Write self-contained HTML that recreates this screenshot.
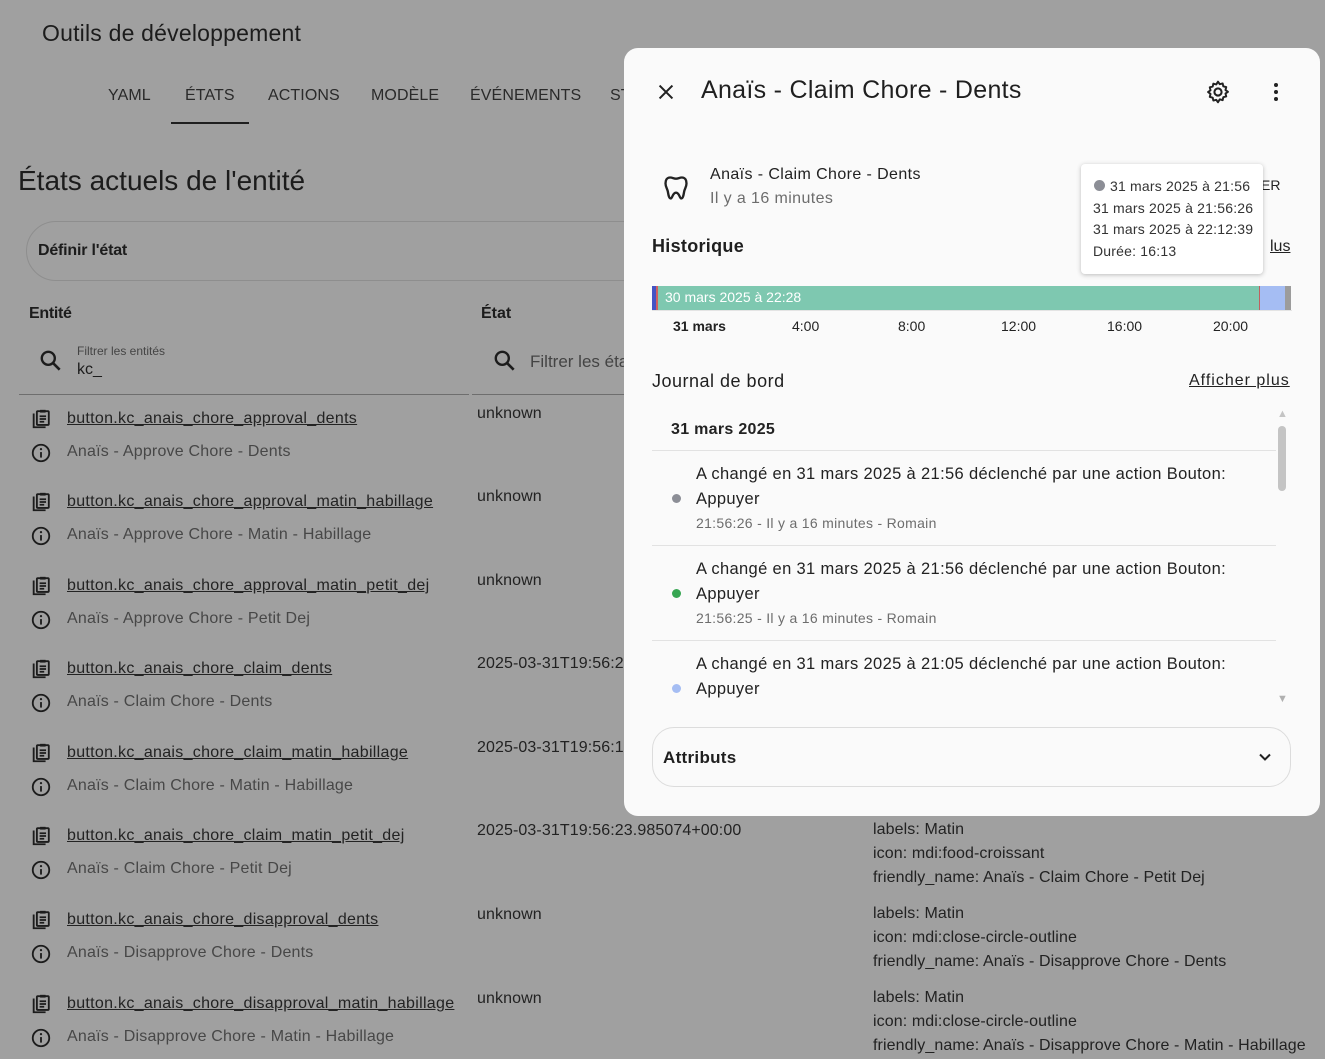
<!DOCTYPE html>
<html><head><meta charset="utf-8"><style>
*{margin:0;padding:0;box-sizing:border-box}
body{width:1325px;height:1059px;overflow:hidden;background:#a0a0a0;font-family:"Liberation Sans",sans-serif;color:#1c1c1c;position:relative}
.a{position:absolute;white-space:nowrap}
.tab{position:absolute;top:87px;font-size:16px;color:#2a2a2a;letter-spacing:0.1px}
.lnk{font-size:16px;text-decoration:underline;color:#232323;letter-spacing:0.3px}
.sub{font-size:16px;color:#474747;letter-spacing:0.2px}
.st{font-size:16px;color:#222;letter-spacing:0.1px}
.attr{font-size:16px;color:#222;line-height:24px;letter-spacing:0.1px}
.dlg{position:absolute;left:624px;top:48px;width:696px;height:768px;background:#fafafa;border-radius:14px;overflow:hidden}
.tk{position:absolute;top:0;font-size:14px;color:#222}
.msg{position:absolute;left:72px;font-size:16.5px;color:#222;line-height:25px;letter-spacing:0.35px}
.dot{position:absolute;left:48px;width:9px;height:9px;border-radius:50%}
.meta{position:absolute;left:72px;font-size:14px;color:#6d6d6d;letter-spacing:0.3px}
</style></head><body>
<div class="a" style="left:42px;top:20px;font-size:23px;color:#1c1c1c;letter-spacing:0.2px">Outils de développement</div>
<div class="tab" style="left:108px">YAML</div>
<div class="tab" style="left:185px">ÉTATS</div>
<div style="position:absolute;left:171px;top:122px;width:78px;height:2px;background:#1f1f1f"></div>
<div class="tab" style="left:268px">ACTIONS</div>
<div class="tab" style="left:371px">MODÈLE</div>
<div class="tab" style="left:470px">ÉVÉNEMENTS</div>
<div class="tab" style="left:610px">ST</div>
<div class="a" style="left:18px;top:165px;font-size:28px;color:#1c1c1c;letter-spacing:0px">États actuels de l'entité</div>
<div style="position:absolute;left:26px;top:221px;width:640px;height:60px;border:1px solid #8e8e8e;border-radius:30px"></div>
<div class="a" style="left:38px;top:242px;font-size:16px;font-weight:bold;letter-spacing:-0.2px">Définir l'état</div>
<div class="a" style="left:29px;top:305px;font-size:16px;font-weight:bold;letter-spacing:-0.3px">Entité</div>
<div class="a" style="left:481px;top:305px;font-size:16px;font-weight:bold">État</div>
<svg class="a" style="left:38px;top:348px" width="26" height="26" viewBox="0 0 24 24"><circle cx="9.5" cy="9.5" r="6" fill="none" stroke="#1c1c1c" stroke-width="2.2"/><path d="M14 14l6 6" stroke="#1c1c1c" stroke-width="2.4"/></svg>
<div class="a" style="left:77px;top:344px;font-size:12px;color:#444">Filtrer les entités</div>
<div class="a" style="left:77px;top:361px;font-size:16px">kc_</div>
<svg class="a" style="left:492px;top:348px" width="26" height="26" viewBox="0 0 24 24"><circle cx="9.5" cy="9.5" r="6" fill="none" stroke="#1c1c1c" stroke-width="2.2"/><path d="M14 14l6 6" stroke="#1c1c1c" stroke-width="2.4"/></svg>
<div class="a" style="left:530px;top:352px;font-size:17px;color:#444">Filtrer les éta</div>
<div style="position:absolute;left:19px;top:394px;width:450px;height:1px;background:#6e6e6e"></div>
<div style="position:absolute;left:472px;top:394px;width:160px;height:1px;background:#6e6e6e"></div>

<div id="rows"></div>
<script>
var rows=[
["button.kc_anais_chore_approval_dents","Anaïs - Approve Chore - Dents","unknown"],
["button.kc_anais_chore_approval_matin_habillage","Anaïs - Approve Chore - Matin - Habillage","unknown"],
["button.kc_anais_chore_approval_matin_petit_dej","Anaïs - Approve Chore - Petit Dej","unknown"],
["button.kc_anais_chore_claim_dents","Anaïs - Claim Chore - Dents","2025-03-31T19:56:2"],
["button.kc_anais_chore_claim_matin_habillage","Anaïs - Claim Chore - Matin - Habillage","2025-03-31T19:56:1"],
["button.kc_anais_chore_claim_matin_petit_dej","Anaïs - Claim Chore - Petit Dej","2025-03-31T19:56:23.985074+00:00"],
["button.kc_anais_chore_disapproval_dents","Anaïs - Disapprove Chore - Dents","unknown"],
["button.kc_anais_chore_disapproval_matin_habillage","Anaïs - Disapprove Chore - Matin - Habillage","unknown"]];
var tops=[410,493,577,660,744,827,911,995];
var attrs={5:["labels: Matin","icon: mdi:food-croissant","friendly_name: Anaïs - Claim Chore - Petit Dej"],6:["labels: Matin","icon: mdi:close-circle-outline","friendly_name: Anaïs - Disapprove Chore - Dents"],7:["labels: Matin","icon: mdi:close-circle-outline","friendly_name: Anaïs - Disapprove Chore - Matin - Habillage"]};
var h="";
rows.forEach(function(r,i){var t=tops[i];
h+='<svg class="a" style="left:30px;top:'+(t-2)+'px" width="22" height="22" viewBox="0 0 24 24"><path d="M4 6v15h13" fill="none" stroke="#1c1c1c" stroke-width="2"/><rect x="7.5" y="3.5" width="13" height="15" rx="1" fill="none" stroke="#1c1c1c" stroke-width="2"/><rect x="11" y="2" width="6" height="3" fill="#1c1c1c"/><path d="M10.5 9h7M10.5 12h7M10.5 15h5" stroke="#1c1c1c" stroke-width="1.8"/></svg>';
h+='<div class="a lnk" style="left:67px;top:'+t+'px">'+r[0]+'</div>';
h+='<svg class="a" style="left:30px;top:'+(t+32)+'px" width="22" height="22" viewBox="0 0 24 24"><circle cx="12" cy="12" r="9" fill="none" stroke="#1c1c1c" stroke-width="2"/><path d="M12 11v6" stroke="#1c1c1c" stroke-width="2"/><circle cx="12" cy="7.8" r="1.2" fill="#1c1c1c"/></svg>';
h+='<div class="a sub" style="left:67px;top:'+(t+33)+'px">'+r[1]+'</div>';
h+='<div class="a st" style="left:477px;top:'+(t-5)+'px">'+r[2]+'</div>';
if(attrs[i]){h+='<div class="a attr" style="left:873px;top:'+(t-9)+'px">'+attrs[i].join('<br>')+'</div>';}
});
document.getElementById('rows').innerHTML=h;
</script>

<div class="dlg">
<svg class="a" style="left:31px;top:33px" width="22" height="22" viewBox="0 0 24 24"><path d="M5 5l14 14M19 5L5 19" stroke="#222" stroke-width="2.2"/></svg>
<div class="a" style="left:77px;top:28px;font-size:25px;color:#1f1f1f;letter-spacing:0.3px">Anaïs - Claim Chore - Dents</div>
<svg class="a" style="left:581px;top:31px" width="26" height="26" viewBox="0 0 24 24"><path d="M12 2.5l1.6 2.3 2.7-.7.6 2.7 2.7.7-.7 2.7 2.3 1.6-2.3 1.6.7 2.7-2.7.7-.6 2.7-2.7-.7L12 21.5l-1.6-2.3-2.7.7-.6-2.7-2.7-.7.7-2.7L2.8 12l2.3-1.6-.7-2.7 2.7-.7.6-2.7 2.7.7z" fill="none" stroke="#222" stroke-width="1.8" stroke-linejoin="round"/><circle cx="12" cy="12" r="3.3" fill="none" stroke="#222" stroke-width="1.9"/></svg>
<svg class="a" style="left:640px;top:32px" width="24" height="24" viewBox="0 0 24 24"><circle cx="12" cy="5" r="2" fill="#222"/><circle cx="12" cy="12" r="2" fill="#222"/><circle cx="12" cy="19" r="2" fill="#222"/></svg>
<svg class="a" style="left:38px;top:126px" width="28" height="28" viewBox="0 0 24 24"><path d="M7 3C4 3 3 5.5 3 8c0 3 1.5 4.5 2 7 .5 3 1 6 2.5 6s1.5-5 4.5-5 3 5 4.5 5 2-3 2.5-6c.5-2.5 2-4 2-7 0-2.5-1-5-4-5-2 0-3 1-5 1S9 3 7 3z" fill="none" stroke="#222" stroke-width="2" stroke-linejoin="round"/></svg>
<div class="a" style="left:86px;top:118px;font-size:16px;color:#222;letter-spacing:0.4px">Anaïs - Claim Chore - Dents</div>
<div class="a" style="left:86px;top:142px;font-size:16px;color:#6d6d6d;letter-spacing:0.4px">Il y a 16 minutes</div>
<div class="a" style="left:637px;top:129px;font-size:14px;color:#222">ER</div>
<div class="a" style="left:28px;top:188px;font-size:18px;color:#1f1f1f;font-weight:bold;letter-spacing:0.3px">Historique</div>
<div class="a" style="left:646px;top:190px;font-size:16px;color:#222;text-decoration:underline">lus</div>
<div style="position:absolute;left:28px;top:238px;width:639px;height:24px;background:#7ec8b0"></div>
<div style="position:absolute;left:28px;top:238px;width:4px;height:24px;background:#4454c4"></div>
<div style="position:absolute;left:32px;top:238px;width:2px;height:24px;background:#d06060"></div>
<div style="position:absolute;left:635px;top:238px;width:1px;height:24px;background:#c06060"></div>
<div style="position:absolute;left:636px;top:238px;width:25px;height:24px;background:#a5bdf3"></div>
<div style="position:absolute;left:661px;top:238px;width:6px;height:24px;background:#9c9c9c"></div>
<div style="position:absolute;left:28px;top:262px;width:640px;height:1px;background:#e4e4e4"></div>
<div class="a" style="left:41px;top:241px;font-size:14px;color:#fff">30 mars 2025 à 22:28</div>
<div style="position:absolute;left:28px;top:270px;width:640px;height:30px">
<div class="tk" style="left:21px;font-weight:bold">31 mars</div>
<div class="tk" style="left:140px">4:00</div>
<div class="tk" style="left:246px">8:00</div>
<div class="tk" style="left:349px">12:00</div>
<div class="tk" style="left:455px">16:00</div>
<div class="tk" style="left:561px">20:00</div>
</div>
<div style="position:absolute;left:457px;top:116px;width:182px;height:110px;background:#fff;border-radius:4px;box-shadow:0 1px 5px rgba(0,0,0,.25)"></div>
<div style="position:absolute;left:470px;top:132px;width:11px;height:11px;border-radius:50%;background:#8c8e96"></div>
<div class="a" style="left:486px;top:130px;font-size:14px;color:#333;letter-spacing:0.2px">31 mars 2025 à 21:56</div>
<div class="a" style="left:469px;top:152px;font-size:14px;color:#333;letter-spacing:0.2px">31 mars 2025 à 21:56:26</div>
<div class="a" style="left:469px;top:173px;font-size:14px;color:#333;letter-spacing:0.2px">31 mars 2025 à 22:12:39</div>
<div class="a" style="left:469px;top:195px;font-size:14px;color:#333;letter-spacing:0.2px">Durée: 16:13</div>
<div class="a" style="left:28px;top:323px;font-size:18px;color:#1f1f1f;letter-spacing:0.5px">Journal de bord</div>
<div class="a" style="left:565px;top:324px;font-size:16px;color:#222;text-decoration:underline;letter-spacing:1px">Afficher plus</div>
<div class="a" style="left:47px;top:373px;font-size:16px;font-weight:bold;color:#222;letter-spacing:0.3px">31 mars 2025</div>
<div style="position:absolute;left:28px;top:402px;width:624px;height:1px;background:#e2e2e2"></div>
<div style="position:absolute;left:28px;top:497px;width:624px;height:1px;background:#e2e2e2"></div>
<div style="position:absolute;left:28px;top:592px;width:624px;height:1px;background:#e2e2e2"></div>
<div class="msg" style="top:414px">A changé en 31 mars 2025 à 21:56 déclenché par une action Bouton:<br>Appuyer</div>
<div class="dot" style="top:446px;background:#8c8e96"></div>
<div class="meta" style="top:467px">21:56:26 - Il y a 16 minutes - Romain</div>
<div class="msg" style="top:509px">A changé en 31 mars 2025 à 21:56 déclenché par une action Bouton:<br>Appuyer</div>
<div class="dot" style="top:541px;background:#37a652"></div>
<div class="meta" style="top:562px">21:56:25 - Il y a 16 minutes - Romain</div>
<div class="msg" style="top:604px">A changé en 31 mars 2025 à 21:05 déclenché par une action Bouton:<br>Appuyer</div>
<div class="dot" style="top:636px;background:#a5bdf3"></div>
<div style="position:absolute;left:0;top:652px;width:696px;height:16px;background:#fafafa"></div>
<div style="position:absolute;left:654px;top:378px;width:8px;height:65px;border-radius:4px;background:#c4c4c4"></div>
<div class="a" style="left:653px;top:360px;font-size:11px;color:#c4c4c4">▲</div>
<div class="a" style="left:653px;top:645px;font-size:11px;color:#b0b0b0">▼</div>
<div style="position:absolute;left:28px;top:679px;width:639px;height:60px;border:1px solid #dcdcdc;border-radius:22px"></div>
<div class="a" style="left:39px;top:700px;font-size:17px;font-weight:bold;color:#1f1f1f;letter-spacing:0.3px">Attributs</div>
<svg class="a" style="left:631px;top:699px" width="20" height="20" viewBox="0 0 24 24"><path d="M6 9l6 6 6-6" fill="none" stroke="#222" stroke-width="2.4"/></svg>
</div>
</body></html>
